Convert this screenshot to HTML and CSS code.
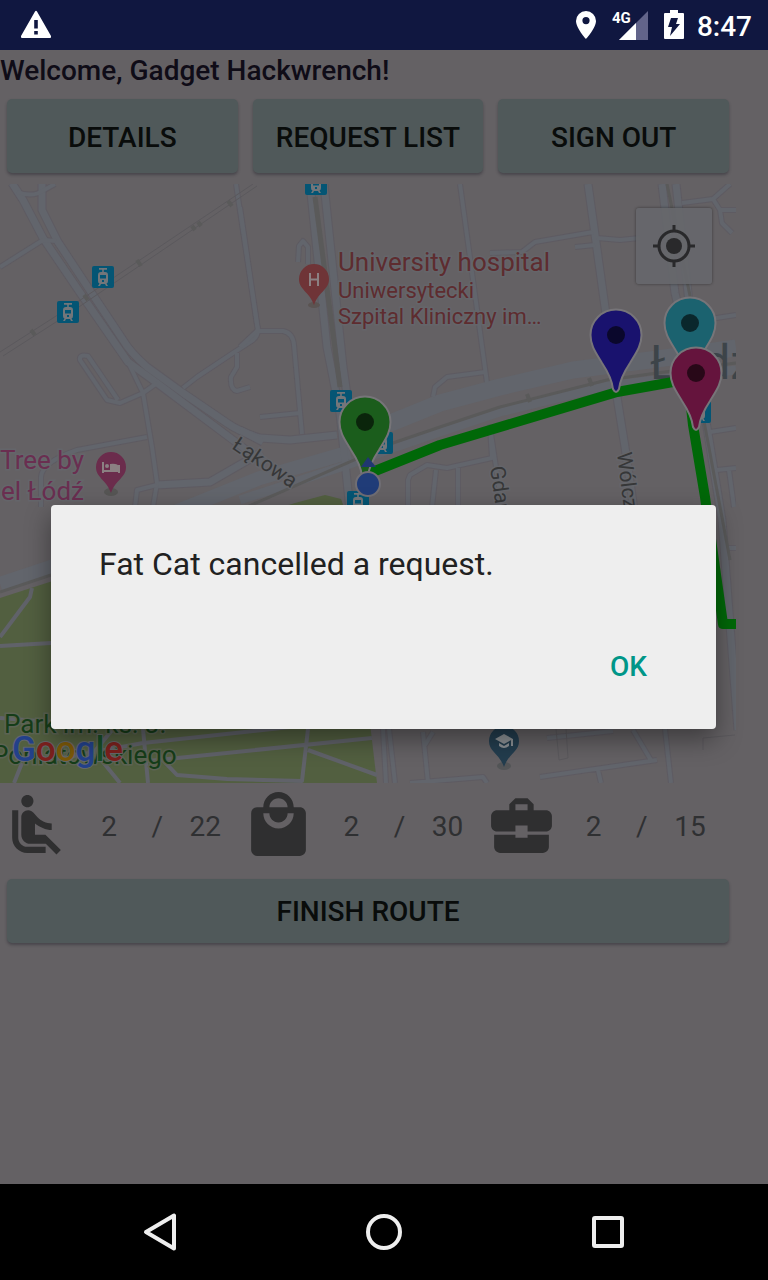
FILE: index.html
```html
<!DOCTYPE html>
<html lang="en">
<head>
<meta charset="utf-8">
<meta name="viewport" content="width=device-width, initial-scale=1">
<title>Route</title>
<link rel="stylesheet" href="styles.css">
</head>
<body>
<header class="status">
  <svg class="status-icon" viewBox="0 0 32 32" aria-hidden="true"><path fill="#fff" fill-rule="evenodd" d="M15 3.500Q16 2 17 3.500L31 28Q31.500 30 30 30H2Q.5 30 1 28ZM14.200 12h3.600v8.500h-3.600ZM14.200 23h3.600v3.500h-3.600Z"/></svg>
  <div class="status-right">
    <svg width="20" height="30" viewBox="0 0 20 30" aria-hidden="true"><path fill="#fff" fill-rule="evenodd" d="M10 1A10 10 0 0 0 0 11C0 18 10 29 10 29S20 18 20 11A10 10 0 0 0 10 1ZM10 7a3.600 3.600 0 1 1 0 7.200A3.600 3.600 0 0 1 10 7Z"/></svg>
    <svg class="signal" width="36" height="30" viewBox="0 0 36 30" aria-hidden="true"><path fill="#62648a" d="M36 1V30H7Z"/><path fill="#fff" d="M24 13V30H7Z"/><text x="0" y="13" font-size="15" font-weight="700" fill="#fff">4G</text></svg>
    <svg width="20" height="30" viewBox="0 0 20 30" aria-hidden="true"><path fill="#fff" d="M6 0h8v3h5q1 0 1 1v24q0 1-1 1H1q-1 0-1-1V4q0-1 1-1h5Z"/><path fill="#101740" d="M7 8h7l-2 6H16L6 26l2-9H4Z"/></svg>
    <time class="clock">8:47</time>
  </div>
</header>

<main class="screen">
  <h1 class="welcome">Welcome, Gadget Hackwrench!</h1>
  <div class="actions">
    <button type="button" class="btn">DETAILS</button>
    <button type="button" class="btn">REQUEST LIST</button>
    <button type="button" class="btn">SIGN OUT</button>
  </div>

  <section class="map" aria-label="Map">
    <svg class="map-canvas" viewBox="0 184 736 599" preserveAspectRatio="xMidYMid slice">
      <defs>
        <symbol id="tram" viewBox="0 0 22 22">
          <rect width="22" height="22" rx="2" fill="#045574"/>
          <path fill="#72767a" fill-rule="evenodd" d="M7 2h8v1.700h-3.200V6H13q3 0 3 3v6q0 2-1.500 2.500L16 20h-2l-1-2H9l-1 2H6l1.500-2.500Q6 17 6 15V9q0-3 3-3h1.200V3.700H7ZM8 9v3.500h6V9ZM10 14v2h2v-2Z"/>
        </symbol>
        <g id="pin">
          <path stroke="#777579" stroke-width="2" d="M0-25.500A25.500 25.500 0 0 0-25.500 0C-25.500 11-20 18-14 28C-8 37-4 45-3 54Q0 60 3 54C4 45 8 37 14 28C20 18 25.500 11 25.500 0A25.500 25.500 0 0 0 0-25.500Z"/>
          <circle r="9" fill="#000" fill-opacity=".6" stroke="none"/>
        </g>
        <path id="poi" d="M0-15A15 15 0 0 0-15 0C-15 11-5 12 0 26C5 12 15 11 15 0A15 15 0 0 0 0-15Z"/>
        <g id="thick">
          <path d="M12 183L23 200L43 238L83 297L128 362L157 383L233 440L262 462"/>
          <path d="M42 183V210L58 242L93 295L123 340Q130 352 147 367L183 393L227 423Q240 432 260 438L290 440L337 435"/>
          <path d="M240 430L263 442"/>
          <path d="M157 485L210 482L262 452"/>
          <path d="M310 184L327 347L340 413L350 510M324 184L343 367L352 430"/>
          <path d="M662 184L675 293L707 427L722 520L738 730M676 184L688 293L695 350"/>
          <path d="M588 184L605 307L617 397L625 447L634 510"/>
        </g>
        <g id="thin">
          <path d="M17 192Q33 198 44 190L55 184M0 267L43 240L56 241"/>
          <path d="M128 362L143 393L152 447L157 483L153 507M157 383L143 393L120 403L107 400L80 360Q79 354 88 356L118 400"/>
          <path d="M183 388L197 377L233 353L253 340Q260 334 257 325L236 184M237 353V367L231 377Q230 390 237 391L250 387"/>
          <path d="M147 437L77 450Q42 462 41 477V507M135 507L137 490L157 485"/>
          <path d="M240 207L258 330L240 347M258 331H283Q293 333 294 345L302 434M260 417L300 413"/>
          <path d="M298 262L299 246L303 241L308 247V264"/>
          <path d="M460 184L487 383M433 397L435 387L447 377L485 372"/>
          <path d="M408 507V480L410 475L427 465L447 468L492 458L490 427L502 507M432 507L436 470M458 468V507"/>
          <path d="M490 253L522 252L535 242L593 232M597 238L620 240L640 238M575 247L595 245"/>
          <path d="M682 203L713 199L730 184M713 199L720 210H736M720 210L722 223L732 233M710 319L736 315M710 432L736 428M717 470L736 468M729 470L734 507M728 548H736"/>
          <path d="M383 729L386 783M389 729L395 783M423 732L428 783M433 732L425 745M410 783L483 777L487 783M540 777L657 760M598 770L601 783M633 730L652 762M665 729L671 783M547 738L613 731"/>
        </g>
      </defs>
      <rect y="184" width="736" height="599" fill="#646164"/>
      <path fill="#525f40" d="M0 598L295 503L325 495L341 499L345 510L377 783H0Z"/>

      <g class="lines casing">
        <use href="#thick" stroke-width="9"/>
        <use href="#thin" stroke-width="6"/>
      </g>
      <g class="lines street-fill">
        <path d="M0 584L51 567L180 510L260 478L350 452" stroke-width="14"/>
        <path d="M350 435L393 422L440 403L500 387L573 370L650 360L736 348" stroke-width="17"/>
        <path d="M240 500L350 464L393 448L440 432L500 412L607 386L736 370" stroke-width="9"/>
        <use href="#thick" stroke-width="7"/>
        <use href="#thin" stroke-width="4"/>
      </g>
      <g class="lines park-path">
        <path d="M32 588L30 597L0 637M0 646L51 643M0 718L51 722M143 729L148 783M51 760L143 743L290 727M148 761L372 738M90 757L113 729M22 763L14 783M98 756L120 783M160 757L177 775L227 779L302 781L308 729M308 750L377 775"/>
      </g>
      <path class="outline" d="M0 352L67 309L253 184M3 356L70 313L257 186M556 729L559 760L568 758L566 729M703 750V738L735 735"/>
      <path class="rail" stroke-width="5" d="M315 197L340 387"/>
      <path class="rail" stroke-width="3" d="M667 184L695 320M700 400L730 560M0 592L51 575M240 510L393 443L440 427L500 407L607 380L657 373L736 363"/>
      <path class="rail" stroke-width="4" d="M31 330L35 335M84 295L88 300M137 260L141 266M192 226L195 230M198 222L201 226M228 201L232 206M527 394L530 402M589 378L592 386"/>

      <use href="#tram" x="92" y="266" width="22" height="22"/>
      <use href="#tram" x="57" y="301" width="22" height="22"/>
      <use href="#tram" x="305" y="173" width="22" height="22"/>
      <use href="#tram" x="330" y="390" width="22" height="22"/>
      <use href="#tram" x="371" y="432" width="22" height="22"/>
      <use href="#tram" x="347" y="491" width="22" height="22"/>
      <use href="#tram" x="689" y="401" width="22" height="22"/>

      <g class="label red">
        <text x="338" y="271" font-size="26">University hospital</text>
        <text x="338" y="298" font-size="22">Uniwersytecki</text>
        <text x="338" y="324" font-size="22">Szpital Kliniczny im…</text>
      </g>
      <g class="label pink" font-size="26">
        <text x="84" y="469" text-anchor="end">Tree by</text>
        <text x="84" y="500" text-anchor="end">el Łódź</text>
      </g>
      <g class="label street" font-size="21">
        <text transform="translate(231 448) rotate(34)">Łąkowa</text>
        <text transform="translate(490 467) rotate(82)">Gdańska</text>
        <text transform="translate(617 453) rotate(83)">Wólczańska</text>
      </g>
      <text class="city" x="650" y="379" font-size="48">Łódź</text>
      <g class="label green" font-size="26">
        <text x="4" y="733">Park im. ks. J.</text>
        <text x="-8" y="764">Poniatowskiego</text>
      </g>

      <ellipse cx="314" cy="305" rx="6" ry="3" fill="#5b5452"/>
      <use href="#poi" x="314" y="279" fill="#6f3437"/>
      <path d="M310 273V286M318 273V286M310 279.500H318" stroke="#8b8082" stroke-width="2" fill="none"/>
      <ellipse cx="111" cy="492" rx="7" ry="4" fill="#565554"/>
      <use href="#poi" x="111" y="467" fill="#6b2c4c"/>
      <path d="M103 462V473M103 471H119M119 473V465" stroke="#8b8082" stroke-width="2" fill="none"/><circle cx="107" cy="466" r="2" fill="#8b8082"/><path fill="#8b8082" d="M110 464Q118 463 119 467V471H110Z"/>
      <ellipse cx="504" cy="766" rx="7" ry="4" fill="#535557"/>
      <use href="#poi" x="504" y="741" fill="#233d4e"/>
      <path d="M495 739L504 734L513 739L504 744ZM499 743L504 746L509 743V746Q504 750 499 746ZM511 739H513V746H511Z" fill="#8b9094"/>

      <path fill="none" stroke="#006808" stroke-width="10" stroke-linejoin="round" d="M370 473L440 445L530 418L617 392L673 382L688 381L693 425L705 497L723 624H736"/>

      <use href="#pin" x="365" y="422" fill="#1b5d1c"/>
      <path fill="#203771" d="M361 467L368 457L376 467Z"/>
      <circle cx="368" cy="484" r="12" fill="#203c78" stroke="#706e74" stroke-width="2"/>
      <use href="#pin" x="616" y="335" fill="#19126e"/>
      <use href="#pin" x="690" y="323" fill="#1b626f"/>
      <use href="#pin" x="696" y="373" fill="#65143d"/>

      <text class="google" x="12" y="761" font-size="35"><tspan fill="#23418a">G</tspan><tspan fill="#7c211d">o</tspan><tspan fill="#7c5908">o</tspan><tspan fill="#23418a">g</tspan><tspan fill="#174f26">l</tspan><tspan fill="#7c211d">e</tspan></text>
    </svg>
    <button type="button" class="locate" aria-label="My location">
      <svg width="42" height="42" viewBox="0 0 42 42"><circle cx="21" cy="21" r="15" fill="none" stroke="#29292b" stroke-width="3"/><circle cx="21" cy="21" r="8" fill="#29292b"/><path stroke="#29292b" stroke-width="3" d="M21 0V7M21 35V42M0 21H7M35 21H42"/></svg>
    </button>
  </section>

  <section class="stats" aria-label="Load">
    <div class="stat">
      <svg viewBox="0 0 24 24" aria-hidden="true"><path d="M7.590 5.410c-.78-.78-.78-2.050 0-2.830.78-.78 2.050-.78 2.830 0 .78.78.78 2.050 0 2.830-.79.79-2.050.79-2.830 0zM6 16V7H4v9c0 2.760 2.240 5 5 5h6v-2H9c-1.660 0-3-1.340-3-3zm14 4.070L14.930 15H11.500v-3.680c1.400 1.150 3.600 2.160 5.500 2.160v-2.160c-1.660.02-3.610-.87-4.670-2.040l-1.400-1.550c-.19-.21-.43-.38-.69-.5-.29-.14-.62-.23-.96-.23h-.03C8.010 7 7 8.010 7 9.250V15c0 1.660 1.340 3 3 3h5.070l3.500 3.500L20 20.070z"/></svg>
      <span>2</span><span>/</span><span>22</span>
    </div>
    <div class="stat">
      <svg viewBox="0 0 24 24" aria-hidden="true"><path d="M19 6h-2c0-2.760-2.240-5-5-5S7 3.240 7 6H5c-1.100 0-1.990.9-1.990 2L3 20c0 1.100.9 2 2 2h14c1.100 0 2-.9 2-2V8c0-1.100-.9-2-2-2zm-7-3c1.660 0 3 1.340 3 3H9c0-1.660 1.340-3 3-3zm0 10c-2.760 0-5-2.240-5-5h2c0 1.660 1.340 3 3 3s3-1.340 3-3h2c0 2.760-2.240 5-5 5z"/></svg>
      <span>2</span><span>/</span><span>30</span>
    </div>
    <div class="stat">
      <svg viewBox="0 0 24 24" aria-hidden="true"><path d="M10 16v-1H3.010L3 19c0 1.110.89 2 2 2h14c1.110 0 2-.89 2-2v-4h-7v1h-4zm10-9h-4.010V5l-2-2h-4l-2 2v2H4c-1.100 0-2 .9-2 2v3c0 1.110.89 2 2 2h6v-2h4v2h6c1.100 0 2-.9 2-2V9c0-1.100-.9-2-2-2zm-6 0h-4V5h4v2z"/></svg>
      <span>2</span><span>/</span><span>15</span>
    </div>
  </section>

  <div class="finish">
    <button type="button" class="btn btn-finish">FINISH ROUTE</button>
  </div>

  <div class="overlay">
    <div class="dialog" role="alertdialog" aria-modal="true" aria-labelledby="message">
      <p class="message" id="message">Fat Cat cancelled a request.</p>
      <div class="dialog-actions"><button type="button" class="ok">OK</button></div>
    </div>
  </div>
</main>

<nav class="navbar" aria-label="System">
  <button type="button" aria-label="Back"><svg width="40" height="40" viewBox="0 0 40 40"><path d="M34 3.500V36.500L6 20Z"/></svg></button>
  <button type="button" aria-label="Home"><svg width="40" height="40" viewBox="0 0 40 40"><circle cx="20" cy="20" r="16"/></svg></button>
  <button type="button" aria-label="Recents"><svg width="40" height="40" viewBox="0 0 40 40"><rect x="6" y="6" width="28" height="28" rx="1"/></svg></button>
</nav>
</body>
</html>
```
FILE: styles.css
```css
* { box-sizing: border-box; }

body {
  margin: 0;
  min-height: 100vh;
  display: flex;
  flex-direction: column;
  font-family: Roboto, "Liberation Sans", sans-serif;
  background: #646164;
}

button {
  margin: 0;
  padding: 0;
  border: 0;
  font: inherit;
  cursor: pointer;
}

svg { display: block; }

.status {
  display: flex;
  align-items: center;
  justify-content: space-between;
  height: 50px;
  padding: 0 16px 0 20px;
  background: #101740;
}

.status-icon { width: 32px; height: 32px; margin-bottom: 2px; }

.status-right { display: flex; align-items: center; gap: 16px; }

.clock {
  color: #fff;
  font-size: 28px;
  font-weight: 500;
  line-height: 32px;
  margin: 3px 0 0 -3px;
}

.screen {
  position: relative;
  flex: 1;
}

.welcome {
  margin: 0;
  padding: 3px 0 10px;
  font-size: 28px;
  font-weight: 500;
  line-height: 36px;
  color: #0f0c17;
}

.actions {
  display: grid;
  grid-template-columns: repeat(3, 1fr);
  gap: 15px;
  padding: 0 39px 11px 7px;
}

.btn {
  height: 74px;
  border-radius: 5px;
  background: #50595a;
  color: #090c0b;
  font-size: 28px;
  font-weight: 500;
  padding-top: 2px;
  box-shadow: 0 2px 3px rgba(30, 30, 40, 0.4);
}

.map {
  position: relative;
  margin-right: 32px;
}

.map-canvas { width: 100%; height: auto; }

.lines, .outline, .rail { fill: none; }
.lines { stroke-linejoin: round; }
.casing { stroke: #5e5b62; }
.street-fill { stroke: #62656c; }
.park-path { stroke: #606269; stroke-width: 4; }
.outline { stroke: #5b595d; stroke-width: 1; }
.rail { stroke: #5a5a5a; }

.label { stroke: #64656a; stroke-width: 3; paint-order: stroke; }
.red { fill: #5e2c2f; }
.pink { fill: #6a2e50; }
.green { fill: #163d19; stroke: #5c6353; }
.street { fill: #363738; }
.city { fill: #3d4449; }
.google { font-weight: 500; stroke: #64686a; stroke-width: 2; paint-order: stroke; }

.locate {
  position: absolute;
  top: 24px;
  right: 24px;
  width: 76px;
  height: 76px;
  display: grid;
  place-items: center;
  border-radius: 3px;
  background: rgba(102, 103, 107, 0.92);
  box-shadow: 0 0 3px rgba(0, 0, 0, 0.45);
}

.stats {
  display: grid;
  grid-template-columns: repeat(3, 1fr);
  padding: 6px 41px 17px 0;
}

.stat {
  display: grid;
  grid-template-columns: 72px 1fr 22px 1fr;
  align-items: center;
  text-align: center;
  font-size: 28px;
  line-height: 32px;
  color: #2f3032;
}

.stat span { padding-top: 2px; }

.stat svg { width: 73px; height: 73px; fill: #2f2f30; }

.finish { padding: 0 39px 0 7px; }

.btn-finish { display: block; width: 100%; height: 64px; padding-top: 0; }

.overlay {
  position: absolute;
  inset: 0;
  display: flex;
  align-items: center;
  padding: 0 52px 0 51px;
}

.dialog {
  width: 100%;
  padding: 38px 48px 30px;
  border-radius: 4px;
  background: #eee;
  box-shadow: 0 10px 26px rgba(0, 0, 0, 0.4);
}

.message {
  margin: 0 0 50px;
  font-size: 32px;
  line-height: 42px;
  color: #212121;
}

.dialog-actions { display: flex; justify-content: flex-end; }

.ok {
  padding: 0 21px;
  line-height: 64px;
  font-size: 28px;
  font-weight: 500;
  color: #009688;
  background: none;
}

.navbar {
  display: grid;
  grid-template-columns: repeat(3, 224px);
  justify-content: center;
  height: 96px;
  background: #000;
}

.navbar button { display: grid; place-items: center; background: none; }

.navbar svg { fill: none; stroke: #eee; stroke-width: 4; stroke-linejoin: round; }
```
